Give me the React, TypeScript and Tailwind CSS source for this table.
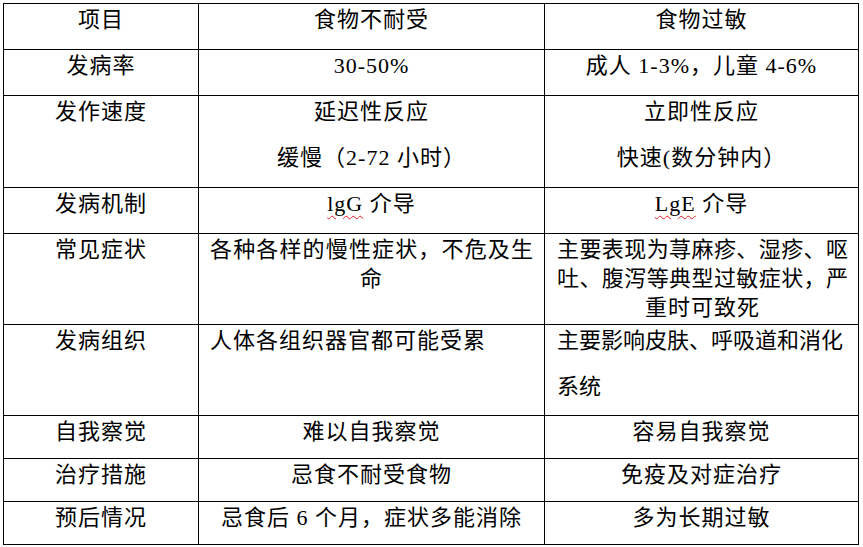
import React from "react";

const font = {
  fontFamily: "'Liberation Serif', 'Noto Sans CJK SC', serif",
};

function Cell({
  children,
  className = "",
}: {
  children?: React.ReactNode;
  className?: string;
}) {
  return (
    <div
      className={`border-r border-b border-black px-[11px] pt-[1px] text-[22px] leading-[29px] tracking-[1px] text-black ${className}`}
    >
      {children}
    </div>
  );
}

// a full-width justified line (Word-style)
function JLine({ children }: { children: React.ReactNode }) {
  return (
    <div className="whitespace-nowrap tracking-normal text-justify [text-align-last:justify]">
      {children}
    </div>
  );
}

function Squiggle({ children }: { children: React.ReactNode }) {
  return (
    <span className="underline decoration-wavy decoration-[#e02020] decoration-1 underline-offset-[4px]">
      {children}
    </span>
  );
}

export default function App() {
  return (
    <div className="min-h-screen w-full bg-white pt-[3px] pl-[3px]" style={font}>
      <div className="grid grid-cols-[195px_346px_314px] grid-rows-[46px_46px_92px_46px_91px_91px_43px_43px_43px] w-max border-l border-t border-black">
        {/* 表头 */}
        <Cell className="text-center">项目</Cell>
        <Cell className="text-center">食物不耐受</Cell>
        <Cell className="text-center">食物过敏</Cell>

        <Cell className="text-center">发病率</Cell>
        <Cell className="text-center">30-50%</Cell>
        <Cell className="text-center">成人 1-3%，儿童 4-6%</Cell>

        <Cell className="text-center">发作速度</Cell>
        <Cell className="text-center">
          <div>延迟性反应</div>
          <div className="mt-[17px]">缓慢（2-72 小时）</div>
        </Cell>
        <Cell className="text-center">
          <div>立即性反应</div>
          <div className="mt-[17px]">快速(数分钟内）</div>
        </Cell>

        <Cell className="text-center">发病机制</Cell>
        <Cell className="text-center">
          <Squiggle>lgG</Squiggle> 介导
        </Cell>
        <Cell className="text-center">
          <Squiggle>LgE</Squiggle> 介导
        </Cell>

        <Cell className="text-center">常见症状</Cell>
        <Cell className="text-center">
          <JLine>各种各样的慢性症状，不危及生</JLine>
          <div>命</div>
        </Cell>
        <Cell className="text-center pl-[12px] pr-[10px]">
          <JLine>主要表现为荨麻疹、湿疹、呕</JLine>
          <JLine>吐、腹泻等典型过敏症状，严</JLine>
          <div>重时可致死</div>
        </Cell>

        <Cell className="text-center">发病组织</Cell>
        <Cell className="text-left">人体各组织器官都可能受累</Cell>
        <Cell className="text-left pl-[12px] tracking-normal">
          <div className="whitespace-nowrap">主要影响皮肤、呼吸道和消化</div>
          <div className="mt-[17px]">系统</div>
        </Cell>

        <Cell className="text-center">自我察觉</Cell>
        <Cell className="text-center">难以自我察觉</Cell>
        <Cell className="text-center">容易自我察觉</Cell>

        <Cell className="text-center">治疗措施</Cell>
        <Cell className="text-center">忌食不耐受食物</Cell>
        <Cell className="text-center">免疫及对症治疗</Cell>

        <Cell className="text-center">预后情况</Cell>
        <Cell className="text-center">忌食后 6 个月，症状多能消除</Cell>
        <Cell className="text-center">多为长期过敏</Cell>
      </div>
    </div>
  );
}
